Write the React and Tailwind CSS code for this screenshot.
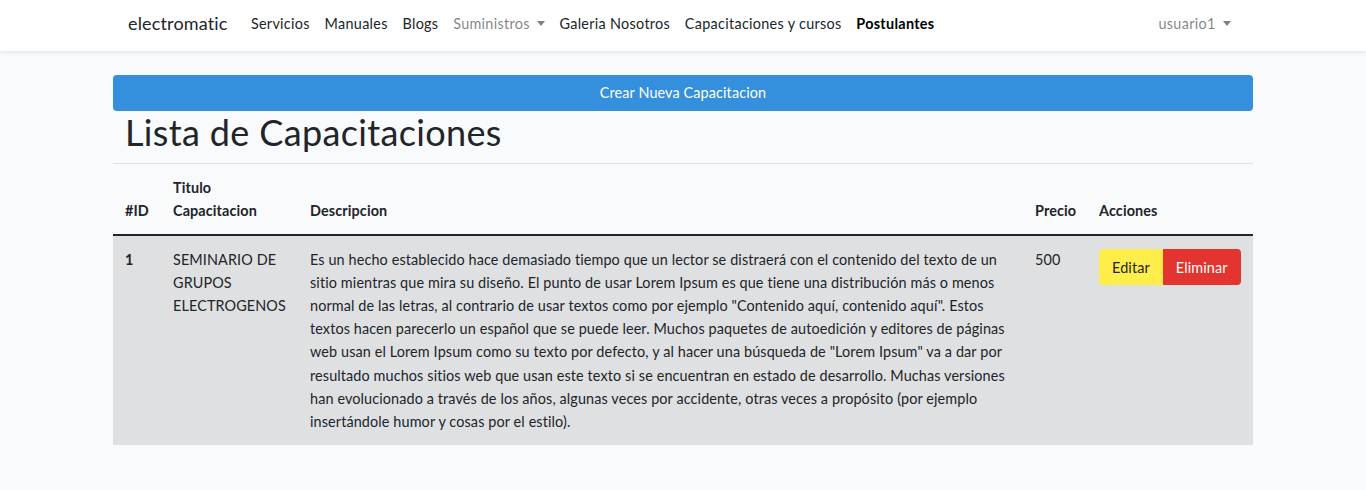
import React from "react";

const font = { fontFamily: "Lato, 'Noto Sans', sans-serif" };

function Caret() {
  return (
    <span className="ml-[7px] inline-block w-0 h-0 border-l-[4.5px] border-r-[4.5px] border-t-[5px] border-l-transparent border-r-transparent border-t-current align-[2px]" />
  );
}

const lines = [
  "Es un hecho establecido hace demasiado tiempo que un lector se distraerá con el contenido del texto de un",
  "sitio mientras que mira su diseño. El punto de usar Lorem Ipsum es que tiene una distribución más o menos",
  "normal de las letras, al contrario de usar textos como por ejemplo \"Contenido aquí, contenido aquí\". Estos",
  "textos hacen parecerlo un español que se puede leer. Muchos paquetes de autoedición y editores de páginas",
  "web usan el Lorem Ipsum como su texto por defecto, y al hacer una búsqueda de \"Lorem Ipsum\" va a dar por",
  "resultado muchos sitios web que usan este texto si se encuentran en estado de desarrollo. Muchas versiones",
  "han evolucionado a través de los años, algunas veces por accidente, otras veces a propósito (por ejemplo",
  "insertándole humor y cosas por el estilo).",
];

export default function App() {
  return (
    <div className="min-h-[490px] bg-[#f8fafc] text-[#212529] text-[14.4px] leading-[1.6] tracking-[0.12px]" style={font}>
      <nav className="bg-white h-[51px] shadow-[0_2px_4px_rgba(0,0,0,0.075)]">
        <div className="w-[1140px] mx-auto px-[15px] h-full flex items-center pb-[4px]">
          <span className="text-[18px] mr-[16px] text-[#212529] tracking-[0.15px]">electromatic</span>
          <div className="flex items-center tracking-[0.3px]">
            <a className="px-[7.4px] text-[#212529]">Servicios</a>
            <a className="px-[7.4px] text-[#212529]">Manuales</a>
            <a className="px-[7.4px] text-[#212529]">Blogs</a>
            <a className="px-[7.4px] text-[rgba(0,0,0,0.5)] flex items-center">Suministros<Caret /></a>
            <a className="px-[7.4px] text-[#212529]">Galeria Nosotros</a>
            <a className="px-[7.4px] text-[#212529]">Capacitaciones y cursos</a>
            <a className="px-[7.4px] text-black font-bold">Postulantes</a>
          </div>
          <div className="ml-auto tracking-[0.35px]">
            <a className="px-[7.2px] text-[rgba(0,0,0,0.5)] flex items-center">usuario1<Caret /></a>
          </div>
        </div>
      </nav>
      <main className="py-[24px]">
        <div className="w-[1140px] mx-auto">
          <button className="w-full h-[36px] rounded-[4px] bg-[#3490dc] text-white text-[14.4px]">
            Crear Nueva Capacitacion
          </button>
          <h1 className="text-[36px] leading-[1.2] pl-[12px] mb-[9px] font-normal tracking-[0.35px]">Lista de Capacitaciones</h1>
          <table className="w-full table-fixed border-collapse">
            <colgroup>
              <col className="w-[48px]" />
              <col className="w-[137px]" />
              <col className="w-[725px]" />
              <col className="w-[64px]" />
              <col className="w-[166px]" />
            </colgroup>
            <thead>
              <tr className="align-bottom text-left font-bold">
                <th className="p-[12px] border-t border-[#dee2e6] border-b-2 border-b-[#212529]">#ID</th>
                <th className="p-[12px] border-t border-[#dee2e6] border-b-2 border-b-[#212529]">Titulo Capacitacion</th>
                <th className="p-[12px] border-t border-[#dee2e6] border-b-2 border-b-[#212529]">Descripcion</th>
                <th className="p-[12px] border-t border-[#dee2e6] border-b-2 border-b-[#212529]">Precio</th>
                <th className="p-[12px] border-t border-[#dee2e6] border-b-2 border-b-[#212529]">Acciones</th>
              </tr>
            </thead>
            <tbody>
              <tr className="bg-[#dfe0e2] align-top">
                <td className="p-[12px] font-bold">1</td>
                <td className="p-[12px]">SEMINARIO DE GRUPOS ELECTROGENOS</td>
                <td className="p-[12px]">
                  {lines.map((l, i) => (
                    <span key={i} className="block whitespace-nowrap">{l}</span>
                  ))}
                </td>
                <td className="p-[12px]">500</td>
                <td className="p-[12px]">
                  <div className="inline-flex mt-px">
                    <button className="h-[36px] px-[13px] bg-[#ffed4a] text-[#212529] rounded-l-[4px]">Editar</button>
                    <button className="h-[36px] px-[13px] bg-[#e3342f] text-white rounded-r-[4px]">Eliminar</button>
                  </div>
                </td>
              </tr>
            </tbody>
          </table>
        </div>
      </main>
    </div>
  );
}
